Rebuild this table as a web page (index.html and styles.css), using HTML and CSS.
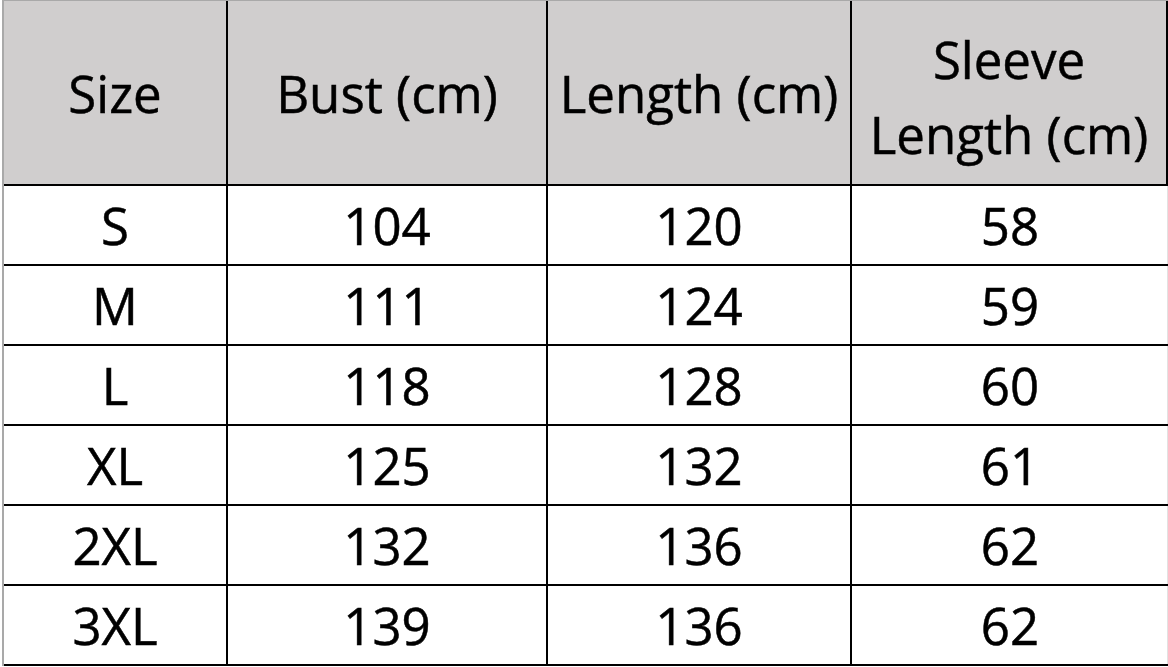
FILE: index.html
```html
<!DOCTYPE html>
<html lang="en">
<head>
<meta charset="utf-8">
<title>Size Chart</title>
<link rel="stylesheet" href="styles.css">
</head>
<body>
<div class="chart">
  <div class="cell head">Size</div>
  <div class="cell head">Bust (cm)</div>
  <div class="cell head">Length (cm)</div>
  <div class="cell head last">Sleeve<br>Length (cm)</div>

  <div class="cell">S</div><div class="cell">104</div><div class="cell">120</div><div class="cell end">58</div>
  <div class="cell">M</div><div class="cell">111</div><div class="cell">124</div><div class="cell end">59</div>
  <div class="cell">L</div><div class="cell">118</div><div class="cell">128</div><div class="cell end">60</div>
  <div class="cell">XL</div><div class="cell">125</div><div class="cell">132</div><div class="cell end">61</div>
  <div class="cell">2XL</div><div class="cell">132</div><div class="cell">136</div><div class="cell end">62</div>
  <div class="cell">3XL</div><div class="cell">139</div><div class="cell">136</div><div class="cell end">62</div>
</div>
</body>
</html>
```

FILE: styles.css
```css
html, body {
  margin: 0;
  padding: 0;
  background: #ffffff;
}

.chart {
  margin-left: 2px;
  display: grid;
  grid-template-columns: 224px 320px 304px 316px;
  grid-template-rows: 185px repeat(6, 80px);
  border-left: 2px solid #a9a9a9;
  border-top: 1px solid #a9a9a9;
  width: max-content;
  font-family: "Open Sans", "Noto Sans", sans-serif;
  font-size: 51px;
  color: #000000;
  -webkit-text-stroke: 0.5px #000000;
}

.cell {
  box-sizing: border-box;
  display: flex;
  align-items: center;
  justify-content: center;
  text-align: center;
  border-right: 2px solid #000000;
  border-bottom: 2px solid #000000;
  background: #ffffff;
  line-height: 1.36;
  padding-top: 2px;
}

.head {
  background: #d0cece;
}

.head.last {
  line-height: 75px;
  padding-top: 8px;
}

.end {
  border-right: none;
  box-shadow: inset -5px 0 0 -4px #e2e2e2;
}
```
